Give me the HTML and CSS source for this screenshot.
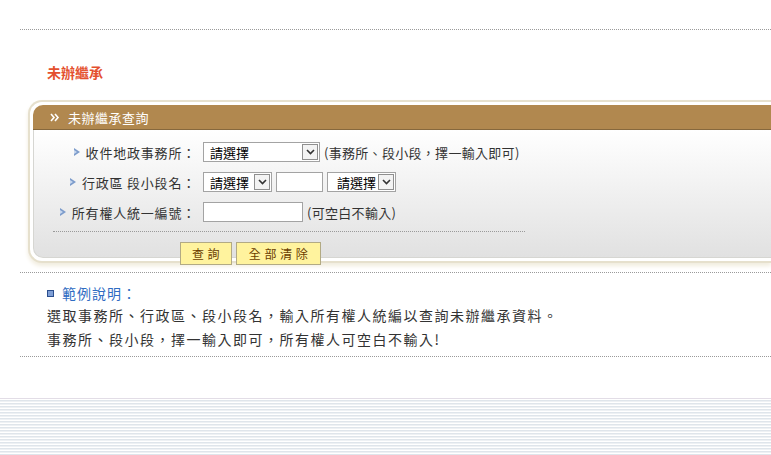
FILE: index.html
```html
<!DOCTYPE html>
<html lang="zh-Hant">
<head>
<meta charset="utf-8">
<title>未辦繼承</title>
<link rel="stylesheet" href="styles.css">
</head>
<body>
<div class="content">
  <div class="rule"></div>
  <h1 class="title">未辦繼承</h1>
  <div class="panel">
    <div class="panel-head">
      <svg class="head-icon" width="10" height="9" viewBox="0 0 10 9"><polyline points="1,1 4,4.5 1,8" fill="none" stroke="#fff" stroke-width="1.6"/><polyline points="5,1 8,4.5 5,8" fill="none" stroke="#fff" stroke-width="1.6"/></svg>
      <span>未辦繼承查詢</span>
    </div>
    <div class="panel-body">
      <div class="form">
        <div class="lbl"><svg class="arrow" width="6" height="8" viewBox="0 0 6 8"><polygon points="0,0 6,4 0,8" fill="#7d9ccb"/><polygon points="0,2 3,4 0,6" fill="#c9d8ee"/></svg>收件地政事務所：</div>
        <div class="ctl">
          <span class="sel w117"><select><option>請選擇</option></select><span class="sel-btn"><svg width="9" height="6" viewBox="0 0 9 6"><polyline points="1,1 4.5,4.5 8,1" fill="none" stroke="#333" stroke-width="1.6"/></svg></span></span>
          <span class="hint">(事務所、段小段，擇一輸入即可)</span>
        </div>
        <div class="lbl"><svg class="arrow" width="6" height="8" viewBox="0 0 6 8"><polygon points="0,0 6,4 0,8" fill="#7d9ccb"/><polygon points="0,2 3,4 0,6" fill="#c9d8ee"/></svg>行政區 段小段名：</div>
        <div class="ctl">
          <span class="sel w69"><select><option>請選擇</option></select><span class="sel-btn"><svg width="9" height="6" viewBox="0 0 9 6"><polyline points="1,1 4.5,4.5 8,1" fill="none" stroke="#333" stroke-width="1.6"/></svg></span></span>
          <input class="txt w47" type="text">
          <span class="sel w69 pad"><select><option>請選擇</option></select><span class="sel-btn"><svg width="9" height="6" viewBox="0 0 9 6"><polyline points="1,1 4.5,4.5 8,1" fill="none" stroke="#333" stroke-width="1.6"/></svg></span></span>
        </div>
        <div class="lbl"><svg class="arrow" width="6" height="8" viewBox="0 0 6 8"><polygon points="0,0 6,4 0,8" fill="#7d9ccb"/><polygon points="0,2 3,4 0,6" fill="#c9d8ee"/></svg>所有權人統一編號：</div>
        <div class="ctl">
          <input class="txt w100" type="text">
          <span class="hint">(可空白不輸入)</span>
        </div>
      </div>
      <div class="rule rule-inner"></div>
      <div class="buttons">
        <button class="btn btn-query" type="button">查 詢</button>
        <button class="btn btn-clear" type="button">全 部 清 除</button>
      </div>
    </div>
  </div>
  <div class="rule rule-after"></div>
  <div class="notes">
    <div class="notes-head"><span class="bullet"></span>範例說明：</div>
    <p class="note">選取事務所、行政區、段小段名，輸入所有權人統編以查詢未辦繼承資料。</p>
    <p class="note">事務所、段小段，擇一輸入即可，所有權人可空白不輸入!</p>
  </div>
  <div class="rule"></div>
</div>
<div class="stripes"></div>
</body>
</html>
```
FILE: styles.css
```css
html, body {
  margin: 0;
  padding: 0;
  background: #fff;
}
body {
  font-family: "Noto Sans CJK TC", "Noto Sans", sans-serif;
  font-size: 13px;
  color: #333;
  overflow: hidden;
}
.content {
  padding: 29px 0 0 20px;
}
.rule {
  height: 0;
  border-top: 1px dotted #9a9a9a;
}
.title {
  margin: 32px 0 0 27px;
  font-size: 14px;
  line-height: 20px;
  font-weight: bold;
  color: #e4502e;
}
.panel {
  margin: 18px 0 0 8px;
  border: 2px solid #e6e0cd;
  border-right: 0;
  border-radius: 14px 0 0 14px;
  padding: 3px 0 3px 3px;
  background: #fff;
  box-shadow: 0 3px 4px #f1ecde;
}
.panel-head {
  height: 24px;
  background: #b1884f;
  border-bottom: 1px solid #86683d;
  border-radius: 10px 0 0 0;
  display: flex;
  align-items: center;
  gap: 8px;
  padding-left: 17px;
  color: #fff;
  font-size: 13px;
  letter-spacing: 0.5px;
}
.head-icon {
  display: block;
}
.panel-body {
  box-sizing: border-box;
  height: 128px;
  padding-top: 7px;
  background: linear-gradient(#ffffff, #e1e1e1);
  border-left: 1px solid #d6d6d2;
  border-bottom: 1px solid #d6d6d2;
  border-radius: 0 0 0 10px;
}
.form {
  display: grid;
  grid-template-columns: 162px auto;
  column-gap: 7px;
  grid-auto-rows: 30px;
  align-items: center;
}
.lbl {
  display: flex;
  justify-content: flex-end;
  align-items: center;
  gap: 6px;
  white-space: nowrap;
  letter-spacing: 0.8px;
}
.arrow {
  display: block;
}
.ctl {
  display: flex;
  align-items: center;
  gap: 4px;
  white-space: nowrap;
}
.sel {
  position: relative;
  display: block;
  height: 20px;
}
.sel select {
  appearance: none;
  -webkit-appearance: none;
  box-sizing: border-box;
  width: 100%;
  height: 20px;
  margin: 0;
  padding: 0 0 0 6px;
  border: 1px solid #a3a3a3;
  border-radius: 0;
  background: #fff;
  color: #000;
  font-family: "Noto Sans CJK TC", sans-serif;
  font-size: 13px;
}
.sel.pad select {
  padding-left: 9px;
}
.sel-btn {
  position: absolute;
  right: 2px;
  top: 2px;
  box-sizing: border-box;
  width: 16px;
  height: 16px;
  border: 1px solid #8f8f8f;
  background: #f3f3f3;
  display: flex;
  align-items: center;
  justify-content: center;
  pointer-events: none;
}
.w117 { width: 117px; }
.w69 { width: 69px; }
.w47 { width: 47px; }
.w100 { width: 100px; }
.txt {
  box-sizing: border-box;
  height: 20px;
  margin: 0;
  padding: 0 3px;
  border: 1px solid #a3a3a3;
  background: #fff;
  font-size: 13px;
}
.hint {
  color: #333;
  letter-spacing: 0.3px;
}
.rule-inner {
  margin: 4px 0 0 19px;
  width: 472px;
}
.buttons {
  display: flex;
  gap: 4px;
  margin-top: 10px;
  padding-left: 146px;
}
.btn {
  box-sizing: border-box;
  height: 23px;
  margin: 0;
  padding: 0;
  background: #fff39e;
  border: 1px solid #b2aa84;
  border-radius: 0;
  color: #6b3d00;
  font-family: "Noto Sans CJK TC", sans-serif;
  font-size: 12px;
  letter-spacing: 0.5px;
}
.btn-query { width: 52px; }
.btn-clear { width: 85px; }
.rule-after {
  margin-top: 9px;
}
.notes {
  padding: 10px 0 5px 27px;
}
.notes-head {
  display: flex;
  align-items: center;
  gap: 8px;
  color: #2f6cc2;
  font-size: 14px;
  line-height: 20px;
  letter-spacing: 1px;
}
.bullet {
  display: block;
  box-sizing: border-box;
  width: 7px;
  height: 7px;
  border: 1px solid #2b4f8e;
  background: #7f9fd6;
}
.note {
  margin: 0;
  font-size: 14px;
  line-height: 24px;
  letter-spacing: 1.5px;
  color: #333;
  white-space: nowrap;
}
.stripes {
  margin-top: 41px;
  height: 58px;
  border-top: 1px solid #e2dde6;
  background: repeating-linear-gradient(to bottom, #ffffff 0, #ffffff 1px, #dfe5eb 1px, #dfe5eb 2px, #eef1f4 2px, #eef1f4 3px);
}
```
